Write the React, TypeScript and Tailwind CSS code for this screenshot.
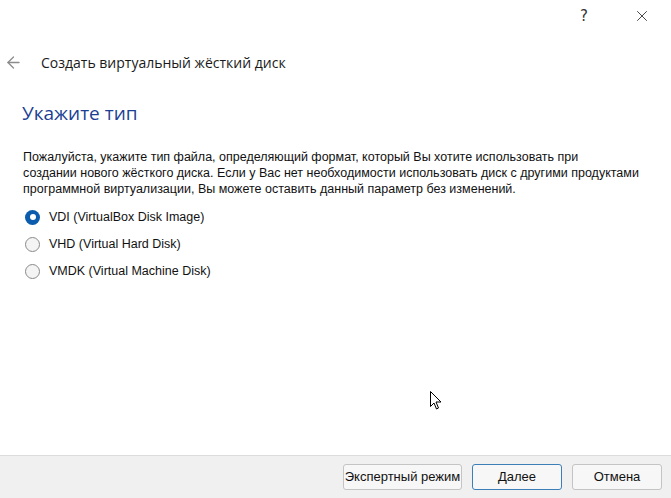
import { ArrowLeft, X } from "lucide-react";

const formats = [
  { id: "vdi", label: "VDI (VirtualBox Disk Image)" },
  { id: "vhd", label: "VHD (Virtual Hard Disk)" },
  { id: "vmdk", label: "VMDK (Virtual Machine Disk)" },
];

function Radio({ checked }: { checked: boolean }) {
  return checked ? (
    <span className="flex h-[15px] w-[15px] items-center justify-center rounded-full bg-[#0b5cad]">
      <span className="h-[6px] w-[6px] rounded-full bg-white" />
    </span>
  ) : (
    <span className="h-[15px] w-[15px] rounded-full border border-[#8a8a8a] bg-[#f4f4f4]" />
  );
}

export default function App() {
  const selected = "vdi";

  return (
    <div
      className="relative flex h-[498px] w-[671px] flex-col bg-white text-[#111]"
      style={{ fontFamily: '"Liberation Sans", sans-serif' }}
    >
      {/* Title bar */}
      <div className="flex h-[32px] items-center justify-end">
        <span className="w-[30px] text-center text-[15px] text-[#333]" style={{ fontFamily: '"DejaVu Sans", sans-serif' }}>
          ?
        </span>
        <div className="ml-[28px] mr-[14px] flex w-[30px] justify-center">
          <X size={18} strokeWidth={1.1} className="text-[#222]" />
        </div>
      </div>

      {/* Wizard header */}
      <div className="mt-[20px] flex items-center">
        <ArrowLeft size={19} strokeWidth={1.6} className="ml-[4px] text-[#8c8c8c]" />
        <span
          className="ml-[18px] text-[14px] text-[#1a1a1a]"
          style={{ fontFamily: '"Open Sans", "Liberation Sans", sans-serif' }}
        >
          Создать виртуальный жёсткий диск
        </span>
      </div>

      {/* Page */}
      <div className="flex-1 px-[22px]">
        <h1
          className="mt-[26px] text-[19px] leading-[28px] text-[#1c3f94]"
          style={{ fontFamily: '"Open Sans", "Liberation Sans", sans-serif' }}
        >
          Укажите тип
        </h1>

        <p className="mt-[22px] pl-[1px] text-[12.5px] leading-[16px]">
          Пожалуйста, укажите тип файла, определяющий формат, который Вы хотите использовать при
          <br />
          создании нового жёсткого диска. Если у Вас нет необходимости использовать диск с другими продуктами
          <br />
          программной виртуализации, Вы можете оставить данный параметр без изменений.
        </p>

        <div className="mt-[12px] flex flex-col gap-[11px] pl-[3px]">
          {formats.map((f) => (
            <label key={f.id} className="flex h-[16px] items-center gap-[9px] text-[12.5px]">
              <Radio checked={f.id === selected} />
              {f.label}
            </label>
          ))}
        </div>
      </div>

      {/* Footer */}
      <div className="flex h-[43px] items-center justify-end gap-[10px] border-t border-[#dcdcdc] bg-[#f0f0f0] pr-[9px]">
        <button className="h-[26px] w-[119px] rounded-[3px] border border-[#c4c4c4] bg-[#f7f7f7] text-[13px]">
          Экспертный режим
        </button>
        <button className="h-[26px] w-[90px] rounded-[3px] border border-[#3c7fb8] bg-[#f7f7f7] text-[13px]">
          Далее
        </button>
        <button className="h-[26px] w-[90px] rounded-[3px] border border-[#c4c4c4] bg-[#f7f7f7] text-[13px]">
          Отмена
        </button>
      </div>

      {/* Mouse pointer */}
      <svg className="absolute left-[430px] top-[391px]" width="13" height="20" viewBox="0 0 13 20">
        <path d="M0.5 0.5 L0.5 15.5 L4 12 L6.5 18 L8.5 17 L6 11 L11 11 Z" fill="white" stroke="black" strokeWidth="1" strokeLinejoin="round" />
      </svg>
    </div>
  );
}
